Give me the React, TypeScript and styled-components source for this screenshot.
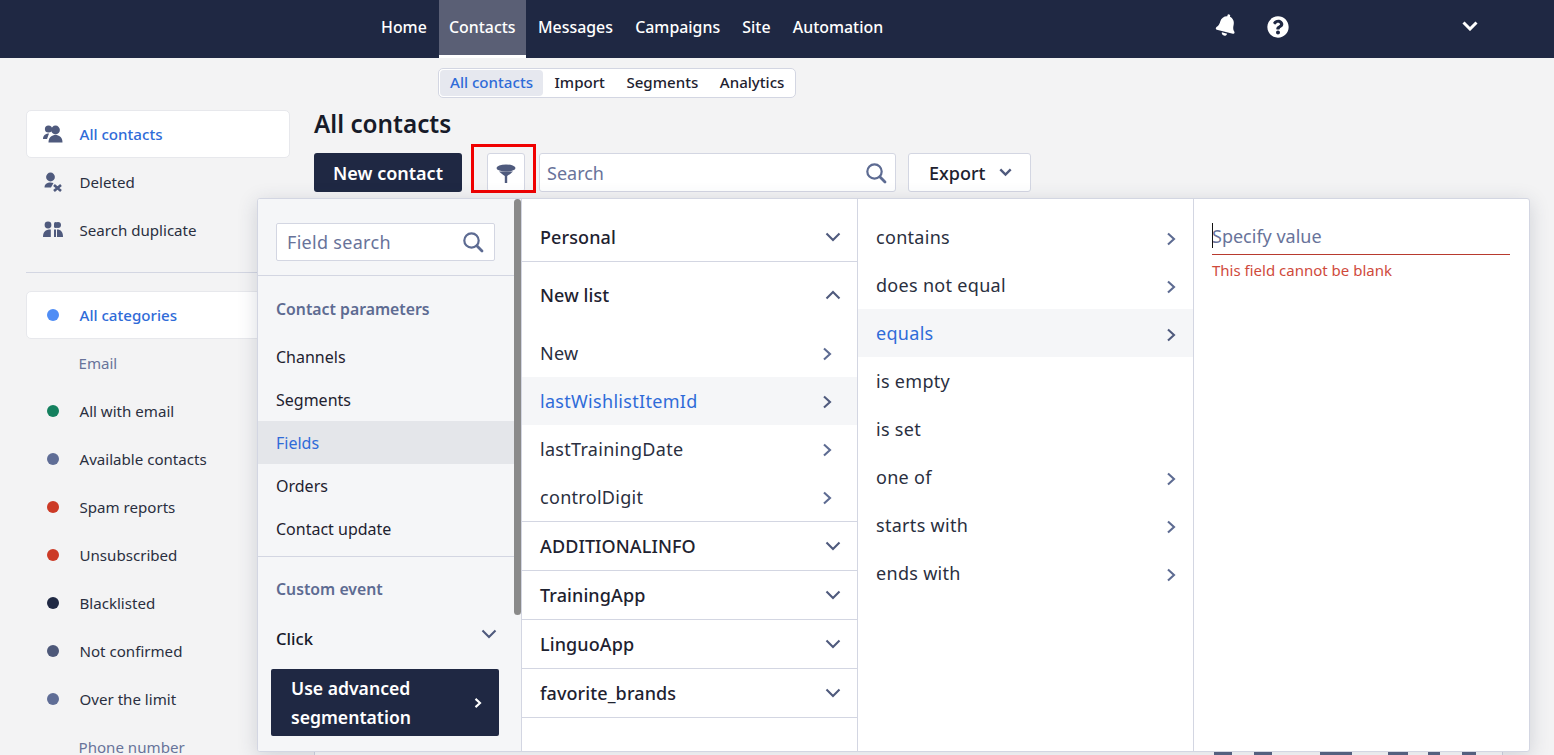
import styled, { createGlobalStyle } from 'styled-components';
import { FaBell, FaQuestionCircle } from 'react-icons/fa';

const FONT = `"Noto Sans", "Open Sans", sans-serif`;
const NAVY = '#1f2843';
const BLUE = '#2f6bd8';
const SLATE = '#5d6b92';
const LINE = '#d3d6e2';
const INK = '#1e2230';

const GlobalStyle = createGlobalStyle`
    html, body { margin: 0; padding: 0; height: 755px; overflow: hidden; }
    body { background: #f3f3f4; font-family: ${FONT}; color: ${INK}; }
    * { box-sizing: border-box; }
`;

const Page = styled.div`
    position: relative;
    width: 1554px;
    height: 755px;
    overflow: hidden;
`;

/* top bar */
const TopBar = styled.header`
    height: 58px;
    background: ${NAVY};
    display: flex;
    align-items: stretch;
    padding-left: 371px;
`;

const TopLink = styled.a<{ $active?: boolean }>`
    display: flex;
    align-items: center;
    height: 58px;
    padding: 0 10px 2px 10px;
    margin-right: ${p => (p.$active ? '2.5px' : '2.2px')};
    color: #fff;
    font-size: 15.9px;
    font-weight: 500;
    background: ${p => (p.$active ? '#5a5f75' : 'transparent')};
    border-bottom: 3px solid ${p => (p.$active ? '#fff' : 'transparent')};
`;

const TopIcons = styled.div`
    display: flex;
    align-items: center;
    margin-left: 321px;
    color: #fff;
    height: 54px;
`;

const BellIcon = styled(FaBell)`
    width: 21px;
    height: 22px;
    transform: translateY(-2px) rotate(14deg);
`;

const HelpIcon = styled(FaQuestionCircle)`
    width: 22px;
    height: 22px;
    margin-left: 30px;
`;

const UserChevron = styled.svg`
    width: 16px;
    height: 10px;
    margin-left: 173px;
    transform: translateY(-1px);
`;

/* second level tabs */
const SubNav = styled.nav`
    display: flex;
    align-items: center;
    width: 358px;
    height: 30px;
    margin: 10px 0 12px 438px;
    padding: 1px;
    background: #fff;
    border: 1px solid ${LINE};
    border-radius: 5px;
`;

const SubLink = styled.a<{ $active?: boolean }>`
    display: flex;
    align-items: center;
    flex: none;
    height: 26px;
    padding: 0 10px 2px;
    margin-right: 1.5px;
    border-radius: 4px;
    font-size: 15.1px;
    font-weight: 500;
    white-space: nowrap;
    color: ${p => (p.$active ? BLUE : INK)};
    background: ${p => (p.$active ? '#e6e8ef' : 'transparent')};
`;

const Body = styled.div`
    display: flex;
    align-items: flex-start;
    padding-left: 26px;
`;

/* left sidebar */
const Sidebar = styled.aside`
    width: 264px;
    flex: none;
`;

const SideItem = styled.div<{ $active?: boolean }>`
    display: flex;
    align-items: center;
    height: 48px;
    padding-left: 16px;
    font-size: 15.1px;
    color: ${p => (p.$active ? BLUE : '#2a2f40')};
    font-weight: ${p => (p.$active ? 500 : 400)};
    background: ${p => (p.$active ? '#fff' : 'transparent')};
    border: 1px solid ${p => (p.$active ? '#e7e8ec' : 'transparent')};
    border-radius: 5px;
`;

const SideIcon = styled.svg`
    width: 20px;
    height: 20px;
    margin-right: 16.5px;
    flex: none;
    fill: #4f5a7d;
`;

const Dot = styled.span<{ $color: string }>`
    width: 12px;
    height: 12px;
    border-radius: 50%;
    margin: 0 20.5px 0 4px;
    flex: none;
    background: ${p => p.$color};
`;

const SideDivider = styled.hr`
    border: 0;
    border-top: 1px solid ${LINE};
    margin: 18px 0 18px;
`;

const SideGroup = styled.div`
    display: flex;
    align-items: center;
    height: 48px;
    padding-left: 52.5px;
    font-size: 15.1px;
    color: #68739a;
`;

/* main column */
const Main = styled.main`
    margin-left: 24px;
    width: 1189px;
    flex: none;
`;

const Title = styled.h1`
    margin: 0;
    height: 28px;
    line-height: 28px;
    font-size: 24.3px;
    font-weight: 600;
    color: #171b29;
`;

const Toolbar = styled.div`
    display: flex;
    align-items: stretch;
    height: 39px;
    margin-top: 15px;
`;

const PrimaryButton = styled.button`
    width: 148px;
    padding: 0;
    border: 0;
    border-radius: 3px;
    background: ${NAVY};
    color: #fff;
    font-family: ${FONT};
    font-size: 18px;
    font-weight: 600;
`;

const FilterWrap = styled.div`
    position: relative;
    margin-left: 25px;
    width: 38px;
`;

const FilterButton = styled.div`
    height: 39px;
    display: flex;
    align-items: center;
    justify-content: center;
    padding-top: 2px;
    background: #fff;
    border: 1px solid ${LINE};
    border-radius: 3px;
`;

const RedFrame = styled.span`
    position: absolute;
    left: -16px;
    top: -9px;
    width: 65px;
    height: 49px;
    border: 3px solid #f00000;
`;

const SearchField = styled.div`
    width: 357px;
    margin-left: 14px;
    display: flex;
    align-items: center;
    justify-content: space-between;
    padding: 0 8px 0 7px;
    background: #fff;
    border: 1px solid ${LINE};
    border-radius: 3px;
    font-size: 18px;
    color: #68739a;
`;

const ExportButton = styled.div`
    width: 123px;
    margin-left: 12px;
    padding-left: 20px;
    display: flex;
    align-items: center;
    gap: 14px;
    background: #fff;
    border: 1px solid ${LINE};
    border-radius: 3px;
    font-size: 18px;
    font-weight: 500;
`;

const ExportChevron = styled.svg`
    width: 13px;
    height: 9px;
`;

const TablePanel = styled.div`
    height: 640px;
    margin-top: 6px;
    padding: 553px 26px 0 0;
    background: #fff;
    border: 1px solid ${LINE};
    display: flex;
    justify-content: flex-end;
`;

const PeekMark = styled.span<{ $w: number; $gap: number }>`
    width: ${p => p.$w}px;
    height: 3px;
    margin-left: ${p => p.$gap}px;
    background: #5a6585;
`;

/* filter popup */
const Popup = styled.section`
    position: absolute;
    left: 257px;
    top: 198px;
    width: 1273px;
    height: 554px;
    display: grid;
    grid-template-columns: 264px 336px 336px 1fr;
    background: #fff;
    border: 1px solid ${LINE};
    border-radius: 3px;
    box-shadow: 0 4px 20px rgba(45, 55, 85, 0.18);
    overflow: hidden;
`;

const FieldColumn = styled.div`
    position: relative;
    background: #f5f6f8;
    border-right: 1px solid ${LINE};
    padding-top: 24px;
`;

const ScrollThumb = styled.span`
    position: absolute;
    right: 0;
    top: 0;
    width: 7px;
    height: 416px;
    background: #8a8a8a;
    border-radius: 4px;
`;

const FieldSearch = styled.div`
    width: 219px;
    height: 38px;
    margin-left: 18px;
    display: flex;
    align-items: center;
    justify-content: space-between;
    padding: 0 10px;
    background: #fff;
    border: 1px solid ${LINE};
    border-radius: 2px;
    font-size: 18px;
    letter-spacing: 0.3px;
    color: #68739a;
`;

const ColumnDivider = styled.div<{ $top: number }>`
    height: 1px;
    width: 257px;
    margin-top: ${p => p.$top}px;
    background: ${LINE};
`;

const GroupTitle = styled.div<{ $top: number }>`
    margin-top: ${p => p.$top}px;
    padding-left: 18px;
    font-size: 15.8px;
    font-weight: 600;
    color: ${SLATE};
    height: 22px;
    line-height: 22px;
`;

const FieldList = styled.div`
    margin-top: 15px;
`;

const FieldItem = styled.div<{ $active?: boolean }>`
    display: flex;
    align-items: center;
    width: 256px;
    height: 43px;
    padding-left: 18px;
    font-size: 16px;
    color: ${p => (p.$active ? BLUE : INK)};
    background: ${p => (p.$active ? '#e4e6ea' : 'transparent')};
`;

const ClickRow = styled.div`
    display: flex;
    align-items: center;
    justify-content: space-between;
    width: 257px;
    height: 30px;
    margin-top: 24px;
    padding: 0 18px 2px;
    font-size: 16.6px;
    font-weight: 500;
    color: #14182a;
`;

const ClickChevron = styled.span`
    display: flex;
    margin-bottom: 8px;
`;

const AdvancedButton = styled.div`
    width: 228px;
    height: 67px;
    margin: 15px 0 0 13px;
    padding: 0 17px 0 20px;
    display: flex;
    align-items: center;
    justify-content: space-between;
    background: ${NAVY};
    border-radius: 2px;
    color: #fff;
    font-size: 17.6px;
    font-weight: 600;
    line-height: 29px;
`;

const Column = styled.div<{ $arrowInset: number; $arrowDrop: number }>`
    --arrow-inset: ${p => p.$arrowInset}px;
    --arrow-drop: ${p => p.$arrowDrop}px;
    padding-top: 14px;
    border-right: 1px solid ${LINE};
`;

const GroupHead = styled.div<{ $open?: boolean }>`
    display: flex;
    align-items: center;
    justify-content: space-between;
    height: ${p => (p.$open ? '67px' : '49px')};
    padding: 0 16px ${p => (p.$open ? '2px' : '0')} 18px;
    font-size: 18px;
    font-weight: 500;
    letter-spacing: 0.1px;
    color: ${INK};
    border-bottom: ${p => (p.$open ? '0' : `1px solid ${LINE}`)};
`;

const OptionRow = styled.div<{ $active?: boolean }>`
    display: flex;
    align-items: center;
    justify-content: space-between;
    height: 48px;
    padding: 0 var(--arrow-inset) 0 18px;
    font-size: 18px;
    letter-spacing: 0.3px;
    color: ${p => (p.$active ? BLUE : '#2a2f40')};
    background: ${p => (p.$active ? '#f5f6f8' : 'transparent')};

    svg {
        margin-top: var(--arrow-drop);
    }
`;

const GroupEnd = styled.div`
    height: 1px;
    background: ${LINE};
`;

const ValueColumn = styled.div`
    padding: 23px 19px 0 18px;
`;

const ValueInput = styled.div`
    position: relative;
    height: 33px;
    font-size: 18px;
    line-height: 28px;
    color: #68739a;
    border-bottom: 1px solid #b83a2e;
`;

const Caret = styled.span`
    position: absolute;
    left: 0;
    top: 1px;
    width: 1px;
    height: 25px;
    background: #111;
`;

const ErrorText = styled.div`
    margin-top: 5px;
    font-size: 15px;
    color: #cf4a3c;
`;

const Chevron = ({ dir, color = '#4f5a7d', weight = 2.1 }: { dir: 'up' | 'down' | 'right'; color?: string; weight?: number }) => {
    if (dir === 'right') {
        return (
            <svg width="10" height="14" viewBox="0 0 10 14" fill="none">
                <path d="M2 1.5 L8 7 L2 12.5" stroke={color} strokeWidth={weight} />
            </svg>
        );
    }
    return (
        <svg width="16" height="10" viewBox="0 0 16 10" fill="none">
            <path d={dir === 'down' ? 'M1.5 1.5 L8 8 L14.5 1.5' : 'M1.5 8.5 L8 2 L14.5 8.5'} stroke={color} strokeWidth={weight} />
        </svg>
    );
};

const SearchGlyph = () => (
    <svg width="22" height="22" viewBox="0 0 22 22" fill="none">
        <circle cx="9.5" cy="9.5" r="7.2" stroke={SLATE} strokeWidth="2.2" />
        <path d="M14.8 14.8 L20 20" stroke={SLATE} strokeWidth="2.8" strokeLinecap="round" />
    </svg>
);

const FunnelGlyph = () => (
    <svg width="20" height="20" viewBox="0 0 20 20">
        <ellipse cx="10" cy="4" rx="9.5" ry="3.6" fill="#4f5a7d" />
        <path d="M3 7.5 C5.5 10 7.5 11 8.8 12 L8.8 19 L11.2 19 L11.2 12 C12.5 11 14.5 10 17 7.5 Z" fill="#4f5a7d" />
    </svg>
);

const topLinks = ['Home', 'Contacts', 'Messages', 'Campaigns', 'Site', 'Automation'];
const subLinks = ['All contacts', 'Import', 'Segments', 'Analytics'];
const fieldItems = ['Channels', 'Segments', 'Fields', 'Orders', 'Contact update'];
const peekMarks = [[18, 0], [18, 22], [32, 48], [20, 36], [12, 20], [14, 22]];

type Category = { label: string; color?: string };

const categories: Category[] = [
    { label: 'Email' },
    { label: 'All with email', color: '#14805e' },
    { label: 'Available contacts', color: '#5f6d96' },
    { label: 'Spam reports', color: '#cc3a26' },
    { label: 'Unsubscribed', color: '#cc3a26' },
    { label: 'Blacklisted', color: '#1f2843' },
    { label: 'Not confirmed', color: '#4d5879' },
    { label: 'Over the limit', color: '#5f6d96' },
    { label: 'Phone number' },
];

const operators: { label: string; arrow: boolean }[] = [
    { label: 'contains', arrow: true },
    { label: 'does not equal', arrow: true },
    { label: 'equals', arrow: true },
    { label: 'is empty', arrow: false },
    { label: 'is set', arrow: false },
    { label: 'one of', arrow: true },
    { label: 'starts with', arrow: true },
    { label: 'ends with', arrow: true },
];

function App() {
    return (
        <Page>
            <GlobalStyle />
            <TopBar>
                {topLinks.map(l => (
                    <TopLink key={l} $active={l === 'Contacts'}>{l}</TopLink>
                ))}
                <TopIcons>
                    <BellIcon />
                    <HelpIcon />
                    <UserChevron viewBox="0 0 16 10" fill="none">
                        <path d="M1.5 1.5 L8 8 L14.5 1.5" stroke="#fff" strokeWidth="3" />
                    </UserChevron>
                </TopIcons>
            </TopBar>

            <SubNav>
                {subLinks.map(l => (
                    <SubLink key={l} $active={l === 'All contacts'}>{l}</SubLink>
                ))}
            </SubNav>

            <Body>
                <Sidebar>
                    <SideItem $active>
                        <SideIcon viewBox="0 0 20 20">
                            <circle cx="5.5" cy="5" r="3.6" />
                            <path d="M0 15 C0 11 3 9.5 6 9.5 L4 15 Z" />
                            <circle cx="12.5" cy="6" r="4.4" />
                            <path d="M5.5 18.5 C5.5 13 9 11 12.5 11 C16 11 19.5 13 19.5 18.5 Z" />
                        </SideIcon>
                        All contacts
                    </SideItem>
                    <SideItem>
                        <SideIcon viewBox="0 0 20 20">
                            <circle cx="7.5" cy="5" r="4.4" />
                            <path d="M1.5 15.5 C1.5 12 4 10.5 7.5 10.5 L10.5 11 L8 15.5 Z" />
                            <path d="M11 13 L18 19 M18 13 L11 19" stroke="#4f5a7d" strokeWidth="2.6" />
                        </SideIcon>
                        Deleted
                    </SideItem>
                    <SideItem>
                        <SideIcon viewBox="0 0 20 20">
                            <circle cx="5" cy="5" r="3.4" />
                            <path d="M0 17 C0 12 2 9.5 7.8 9.5 L7.8 17 Z" />
                            <rect x="11" y="2" width="3" height="6" rx="1.5" />
                            <circle cx="15" cy="5" r="3" />
                            <path d="M11 9.5 L13 9.5 L13 17 L11 17 Z M14 9.5 C18 9.5 20 12 20 17 L14 17 Z" />
                        </SideIcon>
                        Search duplicate
                    </SideItem>
                    <SideDivider />
                    <SideItem $active>
                        <Dot $color="#4f8df5" />
                        All categories
                    </SideItem>
                    {categories.map(c =>
                        c.color ? (
                            <SideItem key={c.label}>
                                <Dot $color={c.color} />
                                {c.label}
                            </SideItem>
                        ) : (
                            <SideGroup key={c.label}>{c.label}</SideGroup>
                        ),
                    )}
                </Sidebar>

                <Main>
                    <Title>All contacts</Title>
                    <Toolbar>
                        <PrimaryButton>New contact</PrimaryButton>
                        <FilterWrap>
                            <FilterButton><FunnelGlyph /></FilterButton>
                            <RedFrame />
                        </FilterWrap>
                        <SearchField>
                            Search
                            <SearchGlyph />
                        </SearchField>
                        <ExportButton>
                            Export
                            <ExportChevron viewBox="0 0 12 8" fill="none">
                                <path d="M1.2 1.2 L6 6 L10.8 1.2" stroke="#4f5a7d" strokeWidth="2.2" />
                            </ExportChevron>
                        </ExportButton>
                    </Toolbar>
                    <TablePanel>
                        {peekMarks.map(([w, gap]) => (
                            <PeekMark key={`${w}-${gap}`} $w={w} $gap={gap} />
                        ))}
                    </TablePanel>
                </Main>
            </Body>

            <Popup>
                <FieldColumn>
                    <ScrollThumb />
                    <FieldSearch>
                        Field search
                        <SearchGlyph />
                    </FieldSearch>
                    <ColumnDivider $top={14} />
                    <GroupTitle $top={22}>Contact parameters</GroupTitle>
                    <FieldList>
                        {fieldItems.map(f => (
                            <FieldItem key={f} $active={f === 'Fields'}>{f}</FieldItem>
                        ))}
                    </FieldList>
                    <ColumnDivider $top={6} />
                    <GroupTitle $top={21}>Custom event</GroupTitle>
                    <ClickRow>
                        Click
                        <ClickChevron><Chevron dir="down" /></ClickChevron>
                    </ClickRow>
                    <AdvancedButton>
                        <span>Use advanced segmentation</span>
                        <Chevron dir="right" color="#fff" weight={2.8} />
                    </AdvancedButton>
                </FieldColumn>
                <Column $arrowInset={25} $arrowDrop={2}>
                    <GroupHead>Personal<Chevron dir="down" /></GroupHead>
                    <GroupHead $open>New list<Chevron dir="up" /></GroupHead>
                    <OptionRow>New<Chevron dir="right" color={SLATE} /></OptionRow>
                    <OptionRow $active>lastWishlistItemId<Chevron dir="right" /></OptionRow>
                    <OptionRow>lastTrainingDate<Chevron dir="right" color={SLATE} /></OptionRow>
                    <OptionRow>controlDigit<Chevron dir="right" color={SLATE} /></OptionRow>
                    <GroupEnd />
                    <GroupHead>ADDITIONALINFO<Chevron dir="down" /></GroupHead>
                    <GroupHead>TrainingApp<Chevron dir="down" /></GroupHead>
                    <GroupHead>LinguoApp<Chevron dir="down" /></GroupHead>
                    <GroupHead>favorite_brands<Chevron dir="down" /></GroupHead>
                </Column>
                <Column $arrowInset={17} $arrowDrop={4}>
                    {operators.map(o => (
                        <OptionRow key={o.label} $active={o.label === 'equals'}>
                            {o.label}
                            {o.arrow && <Chevron dir="right" color={o.label === 'equals' ? '#4f5a7d' : SLATE} />}
                        </OptionRow>
                    ))}
                </Column>
                <ValueColumn>
                    <ValueInput>
                        <Caret />
                        Specify value
                    </ValueInput>
                    <ErrorText>This field cannot be blank</ErrorText>
                </ValueColumn>
            </Popup>
        </Page>
    );
}

export default App;
